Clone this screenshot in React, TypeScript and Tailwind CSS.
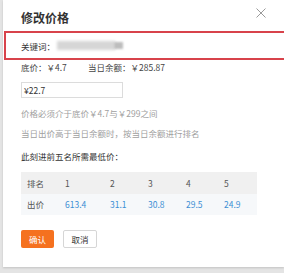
import React from "react";

const font = { fontFamily: '"Noto Sans CJK SC", "Noto Sans", sans-serif' };

export default function App() {
  const ranks = ["1", "2", "3", "4", "5"];
  const prices = ["613.4", "31.1", "30.8", "29.5", "24.9"];
  return (
    <div className="w-[284px] h-[273px] bg-[#e4e4e4] overflow-hidden" style={font}>
      <div className="relative ml-[3px] w-[281px] h-[267px] bg-white shadow-[0_1px_2px_rgba(0,0,0,0.15)]">
        <svg className="absolute left-[253px] top-[8px]" width="10" height="10" viewBox="0 0 10 10">
          <path d="M0.5 0.5 L9.5 9.5 M9.5 0.5 L0.5 9.5" stroke="#9a9a9a" strokeWidth="1" fill="none" />
        </svg>
        <div className="pt-[11px] pl-[18px] text-[12px] leading-[14px] font-bold text-[#333]">修改价格</div>
        <div className="mt-[6px] ml-[1px] h-[29px] border-2 border-[#d8434b] border-r-0 flex items-center pl-[15px]">
          <span className="text-[8.5px] leading-[14px] text-[#333]">关键词：</span>
          <div className="relative ml-[2px] w-[68px] h-[9px]">
            <div className="absolute left-0 top-0 w-[58px] h-[9px] bg-[#d6d6d6] blur-[1.5px]" />
            <div className="absolute left-[57px] top-[1px] w-[9px] h-[7px] bg-[#bdbdbd] blur-[1px]" />
          </div>
        </div>
        <div className="pl-[18px] pr-[24px]">
          <div className="flex h-[14px] items-center text-[8.5px] text-[#444]">
            <span className="w-[67px]">底价：￥4.7</span>
            <span>当日余额：￥285.87</span>
          </div>
          <div className="mt-[8px] w-[102px] h-[16px] border border-[#dcdcdc] flex items-center pl-[2px] text-[8.5px] text-[#333]">
            ¥22.7
          </div>
          <div className="mt-[8px] h-[14px] flex items-center text-[8.5px] text-[#a0a0a0]">价格必须介于底价￥4.7与￥299之间</div>
          <div className="mt-[6px] h-[14px] flex items-center text-[8.5px] text-[#a0a0a0]">当日出价高于当日余额时，按当日余额进行排名</div>
          <div className="mt-[9px] h-[14px] flex items-center text-[8.5px] text-[#333]">此刻进前五名所需最低价：</div>
          <div className="mt-[9px] w-[236px] text-[8.5px]">
            <div className="grid grid-cols-[44px_45px_38px_38px_38px_33px] h-[22px] items-center bg-[#f0f0f0] text-[#555]">
              <span className="pl-[6px]">排名</span>
              {ranks.map((r) => (
                <span key={r}>{r}</span>
              ))}
            </div>
            <div className="grid grid-cols-[44px_45px_38px_38px_38px_33px] h-[21px] items-center bg-[#f6f8fa]">
              <span className="pl-[6px] text-[#555]">出价</span>
              {prices.map((p) => (
                <span key={p} className="text-[#3b8fd4]">{p}</span>
              ))}
            </div>
          </div>
          <div className="mt-[15px] flex gap-[9px]">
            <button className="w-[33px] h-[18px] rounded-[2px] bg-[#f5711f] text-white text-[8.5px] flex items-center justify-center">确认</button>
            <button className="w-[34px] h-[18px] rounded-[2px] border border-[#d6d6d6] bg-white text-[#333] text-[8.5px] flex items-center justify-center">取消</button>
          </div>
        </div>
      </div>
    </div>
  );
}
